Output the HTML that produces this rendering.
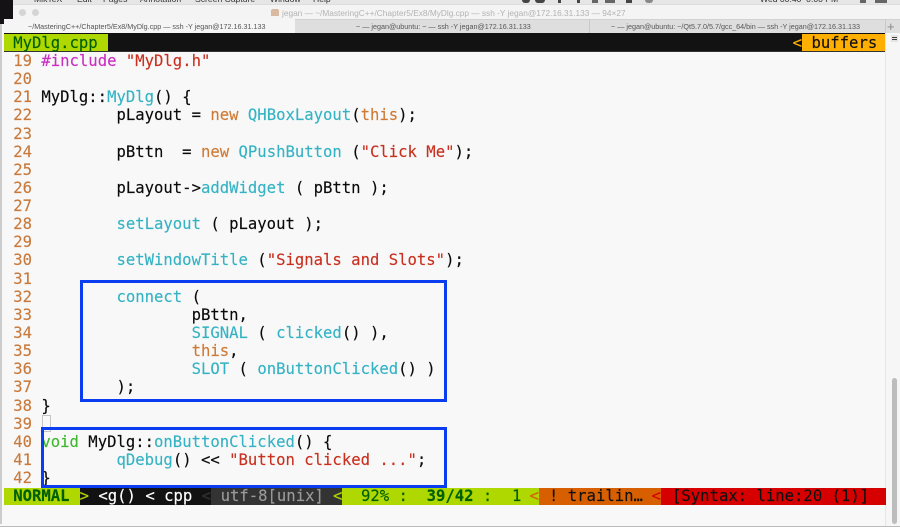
<!DOCTYPE html>
<html><head><meta charset="utf-8">
<style>
html,body{margin:0;padding:0;background:#f8f8f8}
#p{position:relative;width:900px;height:527px;overflow:hidden;background:#f8f8f8}
.a{position:absolute}
.l{position:absolute;left:13.2px;white-space:pre;font:15.6px/18px "DejaVu Sans Mono",monospace;color:#0a0a0a;margin-top:.5px;-webkit-text-stroke:.15px currentColor}
.n{color:#c87a3c}.p{color:#c92fc0}.s{color:#c8301f}.f{color:#35b3c4}.k{color:#cf7a35}.g{color:#3fb82f}
.t{position:absolute;white-space:pre;font:7.2px/10px "Liberation Sans",sans-serif;color:#555}
.u{position:absolute;top:-6px;white-space:pre;font:8.6px/10px "Liberation Sans",sans-serif;color:#333}
.i{position:absolute;top:0;height:3px;background:#444}
.m{position:absolute;white-space:pre;font:15.6px/18px "DejaVu Sans Mono",monospace;-webkit-text-stroke:.15px currentColor}
</style></head><body><div id="p">
<div class="a" style="left:0;top:0;width:900px;height:4px;background:#e6e6e6"></div>
<div class="u" style="left:34px">MikTeX</div>
<div class="u" style="left:77px">Edit</div>
<div class="u" style="left:103px">Pages</div>
<div class="u" style="left:140px">Annotation</div>
<div class="u" style="left:195px">Screen Capture</div>
<div class="u" style="left:270px">Window</div>
<div class="u" style="left:313px">Help</div>
<div class="i" style="left:522px;width:8px;border-radius:0 0 4px 4px"></div>
<div class="i" style="left:535px;width:10px;border-radius:0 0 4px 4px"></div>
<div class="i" style="left:558px;width:3px"></div>
<div class="i" style="left:577px;width:3px"></div>
<div class="i" style="left:592px;width:6px;background:#666"></div>
<div class="i" style="left:605px;width:10px;background:#666"></div>
<div class="i" style="left:626px;width:6px"></div>
<div class="i" style="left:645px;width:8px;background:#888;border-radius:0 0 4px 4px"></div>
<div class="u" style="left:760px">Wed 00:40 &nbsp;0:00 PM</div>
<div class="i" style="left:860px;width:6px;background:#666"></div>
<div class="i" style="left:875px;width:12px;background:#666"></div>
<div class="a" style="left:4px;top:4px;width:896px;height:15px;background:#f4f4f4;border-top:1px solid #ddd;box-sizing:border-box"></div>
<div class="a" style="left:19px;top:9px;width:7px;height:7px;border-radius:50%;background:#d5d5d5"></div>
<div class="a" style="left:32px;top:9px;width:7px;height:7px;border-radius:50%;background:#d5d5d5"></div>
<div class="a" style="left:0;top:0;width:13px;height:24px;background:#151215;border-radius:0 0 4px 0"></div>
<div class="t" style="left:282px;top:7.5px;color:#b3b3b3;font-size:8.3px">jegan — ~/MasteringC++/Chapter5/Ex8/MyDlg.cpp — ssh -Y jegan@172.16.31.133 — 94×27</div>
<div class="a" style="left:271px;top:9px;width:8px;height:7px;background:#d9b9a0;border-radius:2px 2px 0 0"></div>

<div class="a" style="left:4px;top:19px;width:896px;height:14px;background:#dedede;border-top:1px solid #d2d2d2;box-sizing:border-box"></div>
<div class="a" style="left:4px;top:19px;width:291px;height:14px;background:#f5f5f5"></div>
<div class="a" style="left:589px;top:19px;width:1px;height:14px;background:#c8c8c8"></div>
<div class="a" style="left:885px;top:19px;width:1px;height:14px;background:#c8c8c8"></div>
<div class="t" style="left:28px;top:22px">~/MasteringC++/Chapter5/Ex8/MyDlg.cpp — ssh -Y jegan@172.16.31.133</div>
<div class="t" style="left:356px;top:22px">~ — jegan@ubuntu: ~ — ssh -Y jegan@172.16.31.133</div>
<div class="t" style="left:611px;top:22px">~ — jegan@ubuntu: ~/Qt5.7.0/5.7/gcc_64/bin — ssh -Y jegan@172.16.31.133</div>
<div class="t" style="left:887px;top:20px;font-size:13px;line-height:13px;color:#888">+</div>

<div class="a" style="left:4px;top:33px;width:882px;height:1px;background:#111"></div>
<div class="a" style="left:4px;top:34px;width:104px;height:17px;background:#afd700"></div>
<div class="a" style="left:108px;top:34px;width:694px;height:17px;background:#121212"></div>
<div class="a" style="left:802px;top:34px;width:84px;height:17px;background:#ffaf00"></div>
<div class="a" style="left:4px;top:51px;width:882px;height:1px;background:#333"></div>
<div class="m" style="left:13.2px;top:33.5px;color:#005f00">MyDlg.cpp</div>
<div class="m" style="left:792.6px;top:33.5px;color:#ffaf00">&lt;</div>
<div class="m" style="left:811.5px;top:33.5px;color:#121212">buffers</div>

<div class="a" style="left:885px;top:33px;width:15px;height:494px;background:#f6f6f6;border-left:1px solid #e6e6e6;box-sizing:border-box"></div>
<div class="a" style="left:891px;top:35px;width:7px;height:7px;background:#e4e4e4"></div>
<div class="a" style="left:892px;top:37px;width:5px;height:1px;background:#444;box-shadow:0 2px 0 #444"></div>
<div class="a" style="left:892px;top:378px;width:5px;height:146px;background:#bdbdbd;border-radius:3px"></div>
<div class="a" style="left:0;top:24px;width:1.5px;height:500px;background:#ccc"></div>

<div class="l" style="top:51.5px"><span class="n">19</span> <span class="p">#include</span> <span class="s">"MyDlg.h"</span></div>
<div class="l" style="top:69.6px"><span class="n">20</span></div>
<div class="l" style="top:87.8px"><span class="n">21</span> MyDlg::<span class="f">MyDlg</span>() {</div>
<div class="l" style="top:105.9px"><span class="n">22</span>         pLayout = <span class="k">new</span> <span class="f">QHBoxLayout</span>(<span class="k">this</span>);</div>
<div class="l" style="top:124px"><span class="n">23</span></div>
<div class="l" style="top:142.2px"><span class="n">24</span>         pBttn  = <span class="k">new</span> <span class="f">QPushButton</span> (<span class="s">"Click Me"</span>);</div>
<div class="l" style="top:160.3px"><span class="n">25</span></div>
<div class="l" style="top:178.4px"><span class="n">26</span>         pLayout-&gt;<span class="f">addWidget</span> ( pBttn );</div>
<div class="l" style="top:196.5px"><span class="n">27</span></div>
<div class="l" style="top:214.7px"><span class="n">28</span>         <span class="f">setLayout</span> ( pLayout );</div>
<div class="l" style="top:232.8px"><span class="n">29</span></div>
<div class="l" style="top:250.9px"><span class="n">30</span>         <span class="f">setWindowTitle</span> (<span class="s">"Signals and Slots"</span>);</div>
<div class="l" style="top:269px"><span class="n">31</span></div>
<div class="l" style="top:287.2px"><span class="n">32</span>         <span class="f">connect</span> (</div>
<div class="l" style="top:305.3px"><span class="n">33</span>                 pBttn,</div>
<div class="l" style="top:323.4px"><span class="n">34</span>                 <span class="f">SIGNAL</span> ( <span class="f">clicked</span>() ),</div>
<div class="l" style="top:341.6px"><span class="n">35</span>                 <span class="k">this</span>,</div>
<div class="l" style="top:359.7px"><span class="n">36</span>                 <span class="f">SLOT</span> ( <span class="f">onButtonClicked</span>() )</div>
<div class="l" style="top:377.8px"><span class="n">37</span>         );</div>
<div class="l" style="top:396px"><span class="n">38</span> }</div>
<div class="l" style="top:414.1px"><span class="n">39</span></div>
<div class="l" style="top:432.2px"><span class="n">40</span> <span class="g">void</span> MyDlg::<span class="f">onButtonClicked</span>() {</div>
<div class="l" style="top:450.3px"><span class="n">41</span>         <span class="f">qDebug</span>() &lt;&lt; <span class="s">"Button clicked ..."</span>;</div>
<div class="l" style="top:468.5px"><span class="n">42</span> }</div>

<div class="a" style="left:42px;top:415px;width:9px;height:17px;border:1px solid #c4c4c4;box-sizing:border-box"></div>
<div class="a" style="left:80px;top:280px;width:367px;height:122px;border:3px solid #0a3cf0;box-sizing:border-box"></div>
<div class="a" style="left:41px;top:427px;width:406px;height:61px;border:3px solid #0a3cf0;box-sizing:border-box"></div>

<div class="a" style="left:4px;top:488px;width:76px;height:17px;background:#afd700"></div>
<div class="a" style="left:80px;top:488px;width:131px;height:17px;background:#121212"></div>
<div class="a" style="left:211px;top:488px;width:131px;height:17px;background:#333"></div>
<div class="a" style="left:342px;top:488px;width:197px;height:17px;background:#afd700"></div>
<div class="a" style="left:539px;top:488px;width:122px;height:17px;background:#d75f00"></div>
<div class="a" style="left:661px;top:488px;width:225px;height:17px;background:#d70000"></div>

<div class="m" style="left:13.2px;top:487px;color:#005f00;font-weight:bold">NORMAL</div>
<div class="m" style="left:79.6px;top:487px;color:#afd700">&gt;</div>
<div class="m" style="left:98.4px;top:487px;color:#fff">&lt;g() &lt; cpp</div>
<div class="m" style="left:201.8px;top:487px;color:#333">&lt;</div>
<div class="m" style="left:220.6px;top:487px;color:#999">utf-8[unix]</div>
<div class="m" style="left:333px;top:487px;color:#afd700">&lt;</div>
<div class="m" style="left:361px;top:487px;color:#005f00">92% :</div>
<div class="m" style="left:426.6px;top:487px;color:#005f00"><b>39/42</b> :</div>
<div class="m" style="left:512px;top:487px;color:#005f00">1</div>
<div class="m" style="left:529.5px;top:487px;color:#d75f00">&lt;</div>
<div class="m" style="left:549px;top:487px;color:#121212">! trailin…</div>
<div class="m" style="left:651.6px;top:487px;color:#d70000">&lt;</div>
<div class="m" style="left:672px;top:487px;color:#121212">[Syntax: line:20 (1)]</div>

<div class="a" style="left:0;top:526px;width:900px;height:1px;background:#bbb"></div>
</div></body></html>
